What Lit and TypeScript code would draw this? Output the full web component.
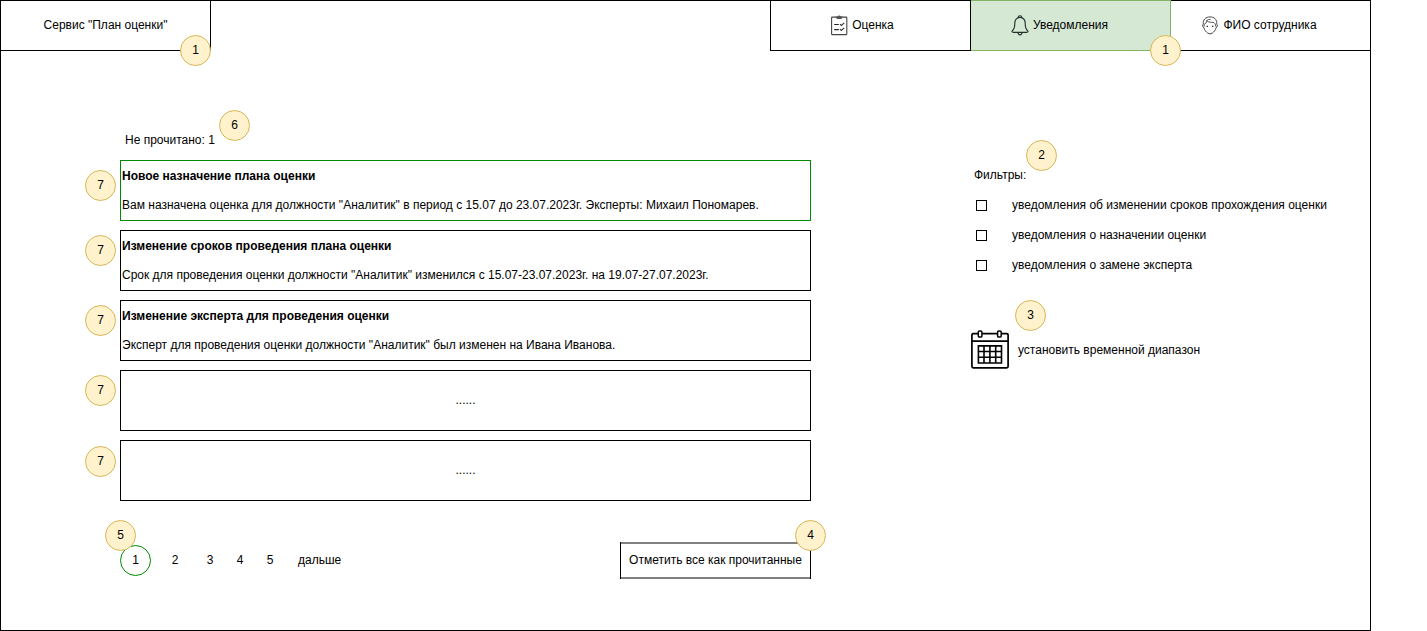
import { LitElement, html, css, svg } from "lit";
import { customElement } from "lit/decorators.js";
import { classMap } from "lit/directives/class-map.js";

interface Notice {
  title?: string;
  text: string;
  unread?: boolean;
  mark: string;
}

const notices: Notice[] = [
  {
    title: "Новое назначение плана оценки",
    text: 'Вам назначена оценка для должности "Аналитик" в период с 15.07 до 23.07.2023г. Эксперты: Михаил Пономарев.',
    unread: true,
    mark: "m10",
  },
  {
    title: "Изменение сроков проведения плана оценки",
    text: 'Срок для проведения оценки должности "Аналитик" изменился с 15.07-23.07.2023г. на 19.07-27.07.2023г.',
    mark: "m5",
  },
  {
    title: "Изменение эксперта для проведения оценки",
    text: 'Эксперт для проведения оценки должности "Аналитик" был изменен на Ивана Иванова.',
    mark: "m5",
  },
  { text: "......", mark: "m5" },
  { text: "......", mark: "m6" },
];

const filters = [
  "уведомления об изменении сроков прохождения оценки",
  "уведомления о назначении оценки",
  "уведомления о замене эксперта",
];

const clipboardIcon = svg`<svg class="icon clipboard" width="17" height="21" viewBox="0 0 17 21">
  <rect x=".6" y="2.1" width="15.2" height="17.5" rx="0.6" fill="none" stroke="#444" stroke-width="1.1"/>
  <path d="M4.8 1.6H6.6Q6.9 .6 8.2 .6T9.8 1.6H11.6V2.6L10.4 4H6L4.8 2.6Z" fill="#555"/>
  <path d="M3.2 9.5H7.8M3.2 14.6H7.8" stroke="#222" stroke-width="1.1"/>
  <path d="M9 9.1L10.4 10.4L13.2 7.8M9 14.2L10.4 15.5L13.2 12.9" fill="none" stroke="#333" stroke-width="1.1"/>
</svg>`;

const bellIcon = svg`<svg class="icon bell" width="18" height="21" viewBox="0 0 18 21">
  <path d="M7.4 2.6Q7.2 .7 9 .7T10.6 2.6C13.3 3.5 14.2 5.5 14.2 8.3C14.2 12.5 14.8 14.4 16.7 15.8Q17.5 17.2 16 17.3H2Q.5 17.2 1.3 15.8C3.2 14.4 3.8 12.5 3.8 8.3C3.8 5.5 4.7 3.5 7.4 2.6Z" fill="none" stroke="#25302a" stroke-width="1.15"/>
  <path d="M7.1 2.7Q9 2 10.9 2.7M6.9 17.5Q7.2 19.8 9 19.8T11.1 17.5" fill="none" stroke="#25302a" stroke-width="1.15"/>
</svg>`;

const faceIcon = svg`<svg class="icon face" width="16" height="19" viewBox="0 0 16 19">
  <path d="M1.9 11.6C.3 11.2 .4 8.7 1.3 8.2C.7 3.6 3.8 .9 8 .9S15.3 3.6 14.7 8.2C15.6 8.7 15.7 11.2 14.1 11.6C13.5 14.4 11.8 15.9 10.2 17.2Q8 18.6 5.8 17.2C4.2 15.9 2.5 14.4 1.9 11.6Z" fill="none" stroke="#4a4a4a"/>
  <path d="M2.2 10.6V8.3Q4.9 7.4 4.6 4.6C6.4 6.6 9.6 6.1 11.9 6.5Q13.6 7.2 13.8 10.6M4.6 4.6Q6.4 3 8.6 3.4" fill="none" stroke="#4a4a4a" stroke-width=".9"/>
  <path d="M4.6 10.4H6M10 10.4H11.4" stroke="#333" stroke-width="1.1"/>
</svg>`;

const calendarIcon = svg`<svg class="calendar" width="38" height="39" viewBox="0 0 38 39">
  <path d="M7 3.7H2.2Q.9 3.7 .9 5V36.6Q.9 37.9 2.2 37.9H35.8Q37.1 37.9 37.1 36.6V5Q37.1 3.7 35.8 3.7H31M11.2 3.7H26.8M.9 11.1H37.1" fill="none" stroke="#000" stroke-width="1.7"/>
  <rect x="7.3" y=".9" width="3.6" height="6.2" rx="1.2" fill="#fff" stroke="#000" stroke-width="1.5"/>
  <rect x="26.6" y=".9" width="3.6" height="6.2" rx="1.2" fill="#fff" stroke="#000" stroke-width="1.5"/>
  <path d="M7.4 15.9H30.5V33H7.4ZM13 15.9V33M18.9 15.9V33M24.7 15.9V33M7.4 21.5H30.5M7.4 27.3H30.5" fill="none" stroke="#000" stroke-width="1.6"/>
</svg>`;

@customElement("note-mark")
export class NoteMark extends LitElement {
  static styles = css`
    :host {
      box-sizing: border-box;
      display: block;
      width: 31px;
      height: 31px;
      padding-top: 7px;
      border: 1px solid #d6b656;
      border-radius: 50%;
      background: #fff2cc;
      text-align: center;
      font: 12px/14px "Liberation Sans", Arial, sans-serif;
      color: #000;
    }
  `;
  render() {
    return html`<slot></slot>`;
  }
}

@customElement("app-root")
export class AppRoot extends LitElement {
  static styles = css`
    :host {
      display: block;
      font: 12px/14px "Liberation Sans", Arial, sans-serif;
      color: #000;
    }
    * {
      box-sizing: border-box;
    }
    .page {
      width: 1371px;
      height: 631px;
      border: 1px solid #000;
      background: #fff;
    }
    .header {
      display: flex;
      justify-content: space-between;
      height: 50px;
    }
    .brand,
    .tab {
      position: relative;
      display: flex;
      align-items: center;
      justify-content: center;
      height: 50px;
      border-bottom: 1px solid #000;
      white-space: nowrap;
    }
    .brand {
      width: 210px;
      border-right: 1px solid #000;
      padding-bottom: 1px;
    }
    .nav {
      display: flex;
    }
    .tab {
      width: 200px;
      gap: 4px;
      padding-bottom: 1px;
    }
    .tab.first {
      width: 201px;
      padding-right: 16px;
      border-left: 1px solid #000;
      border-right: 1px solid #000;
    }
    .tab.active {
      height: 51px;
      margin-top: -1px;
      background: #d5e8d4;
      border: 1px solid #82b366;
      border-left: 0;
      padding: 0 22px 1px 0;
    }
    .tab.last {
      width: 199px;
      gap: 5px;
      padding-right: 22px;
    }
    .icon,
    .calendar {
      display: block;
      flex: none;
    }
    note-mark {
      position: absolute;
    }
    .corner {
      right: -1px;
      bottom: -16px;
    }
    .active .corner {
      right: -11px;
      z-index: 1;
    }
    .main {
      display: flex;
      justify-content: space-between;
      padding: 82px 43px 0 119px;
    }
    .feed {
      width: 691px;
    }
    .count {
      position: relative;
      width: fit-content;
      padding-left: 5px;
      margin-bottom: 13px;
    }
    .count note-mark {
      left: 99px;
      top: -23px;
    }
    .list {
      display: grid;
      gap: 9px;
    }
    .card {
      position: relative;
      height: 61px;
      border: 1px solid #000;
      padding: 8px 1px 0;
      white-space: nowrap;
    }
    .card.unread {
      border-color: #008a00;
    }
    .card.empty {
      padding-top: 22px;
      text-align: center;
    }
    .title {
      font-weight: bold;
      margin-bottom: 15px;
    }
    .card note-mark {
      left: -36px;
    }
    .m10 {
      top: 9px;
    }
    .m5 {
      top: 4px;
    }
    .m6 {
      top: 5px;
    }
    .footer {
      display: flex;
      justify-content: space-between;
      align-items: flex-start;
      padding-top: 41px;
    }
    .pages {
      display: flex;
      padding-top: 3px;
    }
    .num {
      width: 30px;
      padding-top: 8px;
      text-align: center;
    }
    .num.current {
      position: relative;
      width: 31px;
      height: 31px;
      padding-top: 7px;
      margin-right: 9px;
      border: 1px solid #008a00;
      border-radius: 50%;
    }
    .num.second {
      margin-right: 5px;
    }
    .current note-mark {
      left: -16px;
      top: -26px;
    }
    .next {
      padding: 8px 0 0 13px;
    }
    .button {
      position: relative;
      width: 191px;
      height: 37px;
      padding-top: 11px;
      text-align: center;
      border-left: 1px solid #000;
      border-right: 1px solid #000;
      box-shadow: inset 0 2px #808080, inset 0 -2px #808080;
      white-space: nowrap;
    }
    .button note-mark {
      right: -16px;
      top: -22px;
    }
    .side {
      width: 356px;
      padding-top: 35px;
    }
    .heading {
      position: relative;
      width: fit-content;
      padding-left: 3px;
    }
    .heading note-mark {
      left: 55px;
      top: -28px;
    }
    .filter {
      display: flex;
      align-items: center;
      gap: 25px;
      padding-left: 5px;
      margin-top: 16px;
      white-space: nowrap;
    }
    .box {
      width: 11px;
      height: 11px;
      margin-top: 1px;
      border: 1px solid #000;
    }
    .range {
      position: relative;
      display: flex;
      align-items: center;
      gap: 9px;
      margin-top: 58px;
    }
    .range note-mark {
      left: 44px;
      top: -30px;
    }
  `;

  render() {
    return html`
      <div class="page">
        <div class="header">
          <div class="brand">Сервис "План оценки"<note-mark class="corner">1</note-mark></div>
          <div class="nav">
            <div class="tab first">${clipboardIcon}<span>Оценка</span></div>
            <div class="tab active">
              ${bellIcon}<span>Уведомления</span><note-mark class="corner">1</note-mark>
            </div>
            <div class="tab last">${faceIcon}<span>ФИО сотрудника</span></div>
          </div>
        </div>
        <div class="main">
          <div class="feed">
            <div class="count">Не прочитано: 1<note-mark>6</note-mark></div>
            <div class="list">
              ${notices.map(
                (n) => html`<div class=${classMap({ card: true, unread: !!n.unread, empty: !n.title })}>
                  ${n.title ? html`<div class="title">${n.title}</div>` : null}
                  <div>${n.text}</div>
                  <note-mark class=${n.mark}>7</note-mark>
                </div>`
              )}
            </div>
            <div class="footer">
              <div class="pages">
                <div class="num current">1<note-mark>5</note-mark></div>
                <div class="num second">2</div>
                <div class="num">3</div>
                <div class="num">4</div>
                <div class="num">5</div>
                <div class="next">дальше</div>
              </div>
              <div class="button">Отметить все как прочитанные<note-mark>4</note-mark></div>
            </div>
          </div>
          <div class="side">
            <div class="heading">Фильтры:<note-mark>2</note-mark></div>
            ${filters.map((f) => html`<div class="filter"><span class="box"></span><span>${f}</span></div>`)}
            <div class="range">
              ${calendarIcon}<span>установить временной диапазон</span><note-mark>3</note-mark>
            </div>
          </div>
        </div>
      </div>
    `;
  }
}
